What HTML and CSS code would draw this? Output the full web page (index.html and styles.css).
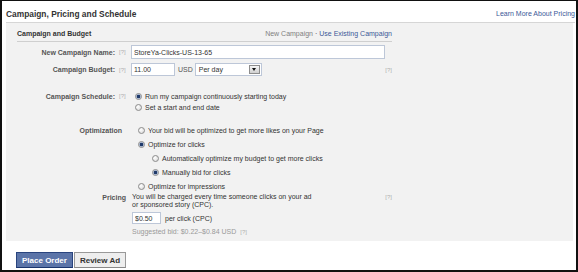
FILE: index.html
```html
<!DOCTYPE html>
<html lang="en">

<head>
    <meta charset="UTF-8">
    <meta name="viewport" content="width=device-width, initial-scale=1.0">
    <title>Campaign, Pricing and Schedule</title>
    <link rel="stylesheet" href="styles.css">
</head>

<body>
    <div class="frame">
        <div class="page-head">
            <h2 class="page-title">Campaign, Pricing and Schedule</h2>
            <a class="link" href="#">Learn More About Pricing</a>
        </div>

        <div class="panel">
            <div class="panel-inner">
                <div class="section-head">
                    <h3 class="section-title">Campaign and Budget</h3>
                    <div class="section-switch">
                        <span class="muted">New Campaign</span> · <a class="link" href="#">Use Existing Campaign</a>
                    </div>
                </div>

                <div class="form-grid">
                    <div class="field-label">New Campaign Name:</div>
                    <div class="help">[?]</div>
                    <div class="field">
                        <input class="text-input name-input" type="text" value="StoreYa-Clicks-US-13-65">
                    </div>

                    <div class="field-label">Campaign Budget:</div>
                    <div class="help">[?]</div>
                    <div class="field">
                        <input class="text-input budget-input" type="text" value="11.00">
                        <span class="currency">USD</span>
                        <div class="select">
                            <span>Per day</span>
                            <span class="select-arrow"></span>
                        </div>
                        <span class="help help-right">[?]</span>
                    </div>

                    <div class="field-label schedule-label">Campaign Schedule:</div>
                    <div class="help schedule-label">[?]</div>
                    <div class="field schedule">
                        <div class="choice"><span class="radio on"></span>Run my campaign continuously starting today</div>
                        <div class="choice"><span class="radio"></span>Set a start and end date</div>
                    </div>
                </div>

                <div class="opt-grid">
                    <div class="opt-label">Optimization</div>
                    <div class="opt-list">
                        <div class="choice"><span class="radio"></span>Your bid will be optimized to get more likes on your Page</div>
                        <div class="choice"><span class="radio on"></span>Optimize for clicks</div>
                        <div class="choice sub"><span class="radio"></span>Automatically optimize my budget to get more clicks</div>
                        <div class="choice sub"><span class="radio on"></span>Manually bid for clicks</div>
                        <div class="choice"><span class="radio"></span>Optimize for impressions</div>
                    </div>

                    <div class="opt-label pricing-label">Pricing</div>
                    <div class="pricing">
                        <div class="pricing-top">
                            <p>You will be charged every time someone clicks on your ad<br>or sponsored story (CPC).</p>
                            <span class="help help-right">[?]</span>
                        </div>
                        <div class="bid-row">
                            <input class="text-input bid-input" type="text" value="$0.50">
                            <span>per click (CPC)</span>
                        </div>
                        <div class="suggested">Suggested bid: $0.22–$0.84 USD <span class="help">[?]</span></div>
                    </div>
                </div>
            </div>
        </div>

        <div class="actions">
            <button class="btn btn-primary">Place Order</button>
            <button class="btn btn-secondary">Review Ad</button>
        </div>
    </div>
</body>

</html>
```

FILE: styles.css
```css
* {
    box-sizing: border-box;
    margin: 0;
    padding: 0;
}

body {
    font-family: "Liberation Sans", Arial, sans-serif;
    font-size: 7px;
    color: #333;
    background: #fff;
}

.frame {
    width: 578px;
    height: 272px;
    border: 2px solid #111;
    border-top-width: 1px;
    padding: 0 3px 0 4px;

    display: flex;
    flex-direction: column;
}

.link {
    color: #3b5998;
    text-decoration: none;
}

.muted {
    color: #808080;
}

/* top header */
.page-head {
    height: 22px;
    padding-top: 4px;
    margin-right: -2px;
    border-bottom: 1px solid #d6d6d6;

    display: flex;
    align-items: center;
    justify-content: space-between;
}

.page-title {
    font-size: 8.4px;
    font-weight: bold;
    color: #333;
}

/* grey panel */
.panel {
    height: 218px;
    background: #f2f2f2;
    padding-left: 11px;
}

.panel-inner {
    width: 375px;
}

.section-head {
    height: 19px;
    padding-top: 2px;
    border-bottom: 1px solid #cfcfcf;

    display: flex;
    align-items: center;
    justify-content: space-between;
}

.section-title {
    font-size: 7px;
    font-weight: bold;
    color: #333;
}

/* campaign + budget fields */
.form-grid {
    margin-top: 3px;

    display: grid;
    grid-template-columns: 100px 14px 1fr;
    row-gap: 4px;
    align-items: center;
}

.field-label {
    text-align: right;
    padding-right: 2px;
    font-weight: bold;
    color: #555;
}

.help {
    padding-left: 2px;
    font-size: 6px;
    color: #b0b0b0;
}

.help-right {
    margin-left: auto;
    padding-left: 0;
}

.field {
    display: flex;
    align-items: center;
}

.text-input {
    height: 13px;
    padding: 0 2px;
    border: 1px solid #bdc7d8;
    background: #fff;
    font: inherit;
    color: #333;
    outline: none;
}

.name-input {
    width: 254px;
    height: 14px;
}

.budget-input {
    width: 44px;
}

.currency {
    margin: 0 2px 0 3px;
    color: #555;
}

.select {
    width: 67px;
    height: 13px;
    padding-left: 3px;
    border: 1px solid #bdc7d8;
    background: #fff;

    display: flex;
    align-items: center;
}

.select-arrow {
    width: 11px;
    height: 9px;
    margin-left: auto;
    margin-right: 1px;
    border: 1px solid #8d8d8d;
    background: linear-gradient(#f6f6f6, #d0d0d0);

    display: flex;
    align-items: center;
    justify-content: center;
}

.select-arrow::after {
    content: "";
    border-left: 2.5px solid transparent;
    border-right: 2.5px solid transparent;
    border-top: 3px solid #111;
}

.schedule-label {
    align-self: start;
    margin-top: 11px;
    line-height: 11px;
}

.schedule {
    margin-top: 11px;
    padding-left: 4px;

    flex-direction: column;
    align-items: flex-start;
}

.choice {
    height: 11px;

    display: flex;
    align-items: center;
}

.radio {
    width: 7px;
    height: 7px;
    margin-right: 3px;
    flex: none;
    border: 1px solid #8c8c8c;
    border-radius: 50%;
    background: radial-gradient(circle at 35% 35%, #fff, #d4d4d4);
}

.radio.on {
    background: radial-gradient(circle, #1f3a6a 0 1.4px, #9fb1cf 2px, #eef0f4 2.6px);
}

/* optimization + pricing */
.opt-grid {
    margin-top: 10px;

    display: grid;
    grid-template-columns: 109px 1fr;
    column-gap: 6px;
}

.opt-label {
    height: 14px;
    padding-right: 4px;
    text-align: right;
    font-weight: bold;
    color: #555;

    display: flex;
    align-items: center;
    justify-content: flex-end;
}

.opt-list {
    padding-left: 6px;
}

.opt-list .choice {
    height: 14px;
}

.opt-list .choice.sub {
    padding-left: 14px;
}

.pricing-label {
    height: 8px;
    padding-right: 0;
}

.pricing {
    display: flex;
    flex-direction: column;
}

.pricing-top {
    line-height: 8px;

    display: flex;
    align-items: flex-start;
}

.bid-row {
    margin-top: 3px;

    display: flex;
    align-items: center;
    gap: 4px;
}

.bid-input {
    width: 29px;
    height: 12px;
}

.suggested {
    margin-top: 3px;
    line-height: 10px;
    color: #999;
}

/* bottom buttons */
.actions {
    padding: 11px 0 0 10px;

    display: flex;
    gap: 1px;
}

.btn {
    height: 16px;
    padding: 0 5px;
    border: 1px solid;
    font-family: "Liberation Sans", Arial, sans-serif;
    font-size: 8px;
    font-weight: bold;
    cursor: pointer;
}

.btn-primary {
    background: #5b74a8;
    border-color: #29447e #29447e #1a356e;
    color: #fff;
}

.btn-secondary {
    background: #eeeeee;
    border-color: #999 #999 #888;
    color: #333;
}
```
